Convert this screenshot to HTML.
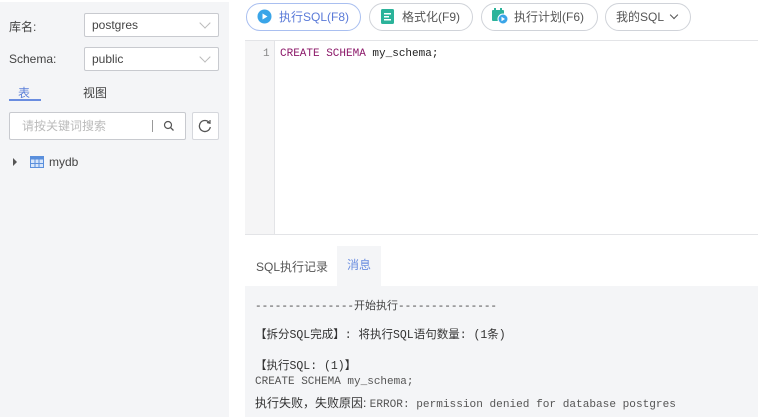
<!DOCTYPE html>
<html><head><meta charset="utf-8"><style>
*{box-sizing:border-box;margin:0;padding:0}
body{width:758px;height:417px;overflow:hidden;background:#fff;font-family:"Liberation Sans","Noto Sans CJK SC",sans-serif;font-size:12px;color:#333;position:relative}
.a{position:absolute}
.left{left:0;top:2px;width:229px;height:415px;background:#f4f5f7}
.sel{position:absolute;left:84px;width:135px;height:24px;background:#fff;border:1px solid #c8cacf;border-radius:2px;padding-left:7px;line-height:22px;font-size:12px;color:#444}
.sel:after{content:"";position:absolute;right:9px;top:5px;width:7px;height:7px;border-right:1px solid #bbb;border-bottom:1px solid #bbb;transform:rotate(45deg)}
.lbl{position:absolute;left:9px;font-size:12px;color:#444}
.btn{position:absolute;top:3px;height:28px;border:1px solid #d0d3d9;border-radius:14px;background:#fff;font-size:12px;color:#555;line-height:26px;padding-left:32px}
.mono{font-family:"Liberation Mono","Noto Sans CJK SC",monospace}
</style></head><body>
<div class="a left">
 <div class="lbl" style="top:16px">库名:</div>
 <div class="sel" style="top:11px">postgres</div>
 <div class="lbl" style="top:50px">Schema:</div>
 <div class="sel" style="top:45px">public</div>
 <div class="a" style="left:18px;top:82px;color:#5b7fd8;font-size:12px">表</div>
 <div class="a" style="left:9px;top:97px;width:32px;height:2px;background:#6a8de0"></div>
 <div class="a" style="left:83px;top:82px;color:#444">视图</div>
 <div class="a" style="left:9px;top:110px;width:177px;height:28px;background:#fff;border:1px solid #c8cacf;border-radius:2px;color:#bbb;padding-left:12px;line-height:26px">请按关键词搜索</div>
 <div class="a" style="left:152px;top:118px;width:1px;height:12px;background:#999"></div>
 <svg class="a" style="left:163px;top:118px" width="12" height="12"><circle cx="5" cy="5" r="3.5" fill="none" stroke="#555" stroke-width="1.2"/><line x1="7.6" y1="7.6" x2="10.5" y2="10.5" stroke="#555" stroke-width="1.3"/></svg>
 <div class="a" style="left:192px;top:110px;width:27px;height:28px;background:#fff;border:1px solid #d5d7dc;border-radius:2px"></div>
 <svg class="a" style="left:198px;top:117px" width="14" height="14"><path d="M11.5 4 A5.5 5.5 0 1 0 12.3 8" fill="none" stroke="#555" stroke-width="1.3"/><path d="M9 3.5 L12 4.2 L12 1" fill="none" stroke="#555" stroke-width="1.2"/></svg>
 <div class="a" style="left:13px;top:156px;width:0;height:0;border-left:4px solid #555;border-top:4px solid transparent;border-bottom:4px solid transparent"></div>
 <svg class="a" style="left:30px;top:154px" width="14" height="12"><rect x="0.5" y="0.5" width="13" height="11" fill="#d7e6fa" stroke="#5a8fdc"/><rect x="0.5" y="0.5" width="13" height="3" fill="#5a8fdc"/><line x1="5" y1="3" x2="5" y2="12" stroke="#5a8fdc"/><line x1="9" y1="3" x2="9" y2="12" stroke="#5a8fdc"/><line x1="0" y1="7.5" x2="14" y2="7.5" stroke="#5a8fdc"/></svg>
 <div class="a" style="left:49px;top:153px;color:#444">mydb</div>
</div>

<div class="btn" style="left:246px;width:115px;border-color:#a9bff0;color:#5a7ad8">执行SQL(F8)</div>
<svg class="a" style="left:257px;top:9px" width="15" height="15"><circle cx="7.5" cy="7.5" r="7" fill="#3aa5e8"/><path d="M5.5 4.5 L10.5 7.5 L5.5 10.5Z" fill="#fff"/></svg>
<div class="btn" style="left:369px;width:104px">格式化(F9)</div>
<svg class="a" style="left:381px;top:9px" width="13" height="15"><rect width="13" height="15" rx="1.5" fill="#2bb39a"/><rect x="3" y="4" width="7" height="1.5" fill="#fff"/><rect x="3" y="7" width="5" height="1.5" fill="#fff"/><rect x="3" y="10" width="7" height="1.5" fill="#fff"/></svg>
<div class="btn" style="left:481px;width:117px">执行计划(F6)</div>
<svg class="a" style="left:492px;top:8px" width="16" height="16"><rect x="0" y="2" width="12" height="11" rx="1" fill="#2bb39a"/><rect x="2" y="0" width="2" height="4" fill="#2bb39a"/><rect x="8" y="0" width="2" height="4" fill="#2bb39a"/><circle cx="11" cy="11" r="5" fill="#3aa5e8" stroke="#fff"/><path d="M9.5 8.8 L13 11 L9.5 13.2Z" fill="#fff"/></svg>
<div class="btn" style="left:605px;width:86px;padding-left:10px">我的SQL <span style="display:inline-block;width:6px;height:6px;border-right:1px solid #555;border-bottom:1px solid #555;transform:rotate(45deg);margin-left:4px;position:relative;top:-3px"></span></div>

<div class="a" style="left:245px;top:40px;width:513px;height:195px;border-top:1px solid #e3e4e7;border-bottom:1px solid #e3e4e7"></div>
<div class="a" style="left:245px;top:41px;width:30px;height:193px;background:#f5f5f6;border-right:1px solid #e3e4e7"></div>
<div class="a mono" style="left:263px;top:48px;color:#888;font-size:11px">1</div>
<div class="a mono" style="left:280px;top:48px;font-size:11px;color:#222"><span style="color:#8c1a6a">CREATE SCHEMA</span> my_schema;</div>

<div class="a" style="left:256px;top:258px;color:#555;font-size:12px">SQL执行记录</div>
<div class="a" style="left:337px;top:246px;width:44px;height:40px;background:#f4f5f7;color:#6a8de0;text-align:center;line-height:38px">消息</div>
<div class="a" style="left:245px;top:286px;width:513px;height:131px;background:#f4f5f7"></div>
<div class="a mono" style="left:255px;top:297px;font-size:11px;color:#444">---------------开始执行---------------</div>
<div class="a mono" style="left:255px;top:326px;font-size:11.5px;color:#333">【拆分SQL完成】: 将执行SQL语句数量: (1条)</div>
<div class="a mono" style="left:255px;top:357px;font-size:11.5px;color:#333">【执行SQL: (1)】</div>
<div class="a mono" style="left:255px;top:376px;font-size:11px;color:#555">CREATE SCHEMA my_schema;</div>
<div class="a mono" style="left:255px;top:394px;font-size:11px;color:#333"><span style="font-family:'Liberation Sans','Noto Sans CJK SC',sans-serif;font-size:12px">执行失败，失败原因: </span><span style="color:#555;font-size:11.1px">ERROR: permission denied for database postgres</span></div>
</body></html>
